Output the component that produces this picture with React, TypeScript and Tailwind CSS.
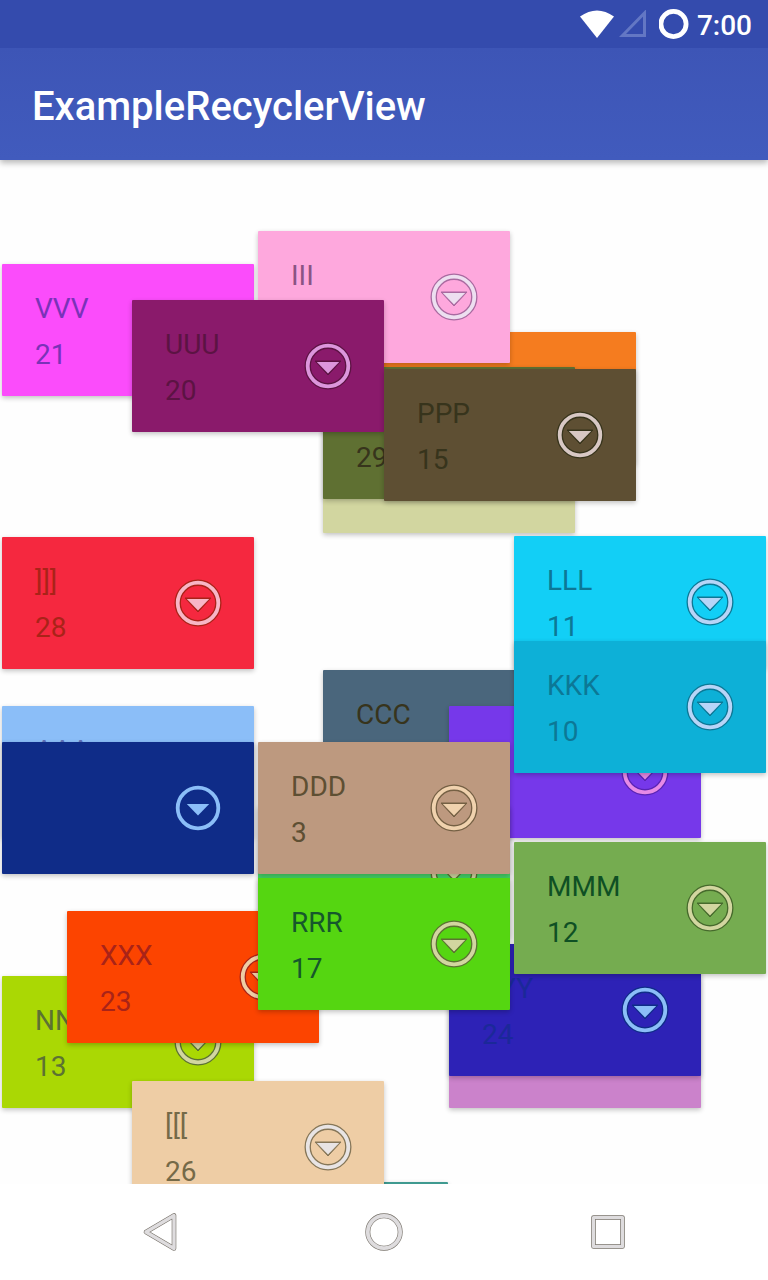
import React from "react";

type CardData = {
  title?: string;
  count?: string;
  place: string;
  fill: string;
  text: string;
  ring: string;
  edge: string;
};

// Listed from the bottom of the stack to the top.
const cards: CardData[] = [
  { place: "left-[384px] top-[172px]", fill: "bg-[#f57c1f]", text: "text-[#a8521c]", ring: "text-[#eecda5]", edge: "text-[#a8521c]" },
  { title: "VVV", count: "21", place: "left-[2px] top-[104px]", fill: "bg-[#fb4cfb]", text: "text-[#7a32b8]", ring: "text-[#eecdf5]", edge: "text-[#7a32b8]" },
  { title: "III", place: "left-[258px] top-[71px]", fill: "bg-[#fea8dd]", text: "text-[#8a5484]", ring: "text-[#eddff0]", edge: "text-[#a96aa0]" },
  { place: "left-[323px] top-[241px]", fill: "bg-[#d2d6a0]", text: "text-[#5f7233]", ring: "text-[#e6e4e8]", edge: "text-[#5f7233]" },
  { count: "29", place: "left-[323px] top-[207px]", fill: "bg-[#5f7032]", text: "text-[#37341c]", ring: "text-[#d2d6a0]", edge: "text-[#37341c]" },
  { title: "UUU", count: "20", place: "left-[132px] top-[140px]", fill: "bg-[#8a1a6b]", text: "text-[#5c1343]", ring: "text-[#dc96dc]", edge: "text-[#5c1343]" },
  { title: "PPP", count: "15", place: "left-[384px] top-[209px]", fill: "bg-[#5e4f33]", text: "text-[#37341c]", ring: "text-[#d8c8c4]", edge: "text-[#37341c]" },
  { title: "]]]", count: "28", place: "left-[2px] top-[377px]", fill: "bg-[#f5283f]", text: "text-[#a92318]", ring: "text-[#f8b6c6]", edge: "text-[#a92318]" },
  { title: "CCC", place: "left-[323px] top-[510px]", fill: "bg-[#4a667c]", text: "text-[#37341c]", ring: "text-[#d4d4d8]", edge: "text-[#37341c]" },
  { place: "left-[449px] top-[546px]", fill: "bg-[#7638ea]", text: "text-[#2d22b6]", ring: "text-[#e78ae6]", edge: "text-[#5a24b4]" },
  { title: "LLL", count: "11", place: "left-[514px] top-[376px]", fill: "bg-[#12cff6]", text: "text-[#0c7896]", ring: "text-[#b7d5f8]", edge: "text-[#0c7896]" },
  { title: "KKK", count: "10", place: "left-[514px] top-[481px]", fill: "bg-[#0db0d7]", text: "text-[#0c7896]", ring: "text-[#b7d5f8]", edge: "text-[#0c7896]" },
  { title: "AAA", place: "left-[2px] top-[546px]", fill: "bg-[#8bbef8]", text: "text-[#5c70b8]", ring: "text-[#e6e4e8]", edge: "text-[#5c70b8]" },
  { place: "left-[2px] top-[582px]", fill: "bg-[#0f2c88]", text: "text-[#0f2c88]", ring: "text-[#8bbef8]", edge: "text-[#0f2c88]" },
  { place: "left-[258px] top-[646px]", fill: "bg-[#44d468]", text: "text-[#5c7233]", ring: "text-[#d2d6a0]", edge: "text-[#5c7233]" },
  { title: "DDD", count: "3", place: "left-[258px] top-[582px]", fill: "bg-[#bd997f]", text: "text-[#5e4f33]", ring: "text-[#f0d2ae]", edge: "text-[#756044]" },
  { title: "NNN", count: "13", place: "left-[2px] top-[816px]", fill: "bg-[#aad804]", text: "text-[#5c7233]", ring: "text-[#d2d6a0]", edge: "text-[#5c7233]" },
  { title: "XXX", count: "23", place: "left-[67px] top-[751px]", fill: "bg-[#fc4400]", text: "text-[#a92318]", ring: "text-[#eecda5]", edge: "text-[#a92318]" },
  { place: "left-[449px] top-[816px]", fill: "bg-[#cb82cb]", text: "text-[#8a5484]", ring: "text-[#e6e4e8]", edge: "text-[#8a5484]" },
  { title: "YYY", count: "24", place: "left-[449px] top-[784px]", fill: "bg-[#2d22b6]", text: "text-[#1b2899]", ring: "text-[#8bbef8]", edge: "text-[#0f2c88]" },
  { title: "RRR", count: "17", place: "left-[258px] top-[718px]", fill: "bg-[#55d611]", text: "text-[#16582c]", ring: "text-[#d2d6a0]", edge: "text-[#5c7233]" },
  { title: "MMM", count: "12", place: "left-[514px] top-[682px]", fill: "bg-[#75ac50]", text: "text-[#0f5024]", ring: "text-[#d2d6a0]", edge: "text-[#466a2c]" },
  { place: "left-[196px] top-[1022px]", fill: "bg-[#3f9a90]", text: "text-[#0c7896]", ring: "text-[#b7d5f8]", edge: "text-[#0c7896]" },
  { title: "[[[", count: "26", place: "left-[132px] top-[921px]", fill: "bg-[#eecda5]", text: "text-[#756a48]", ring: "text-[#e8e4e4]", edge: "text-[#857658]" },
];

function ExpandIcon({ ring, edge }: { ring: string; edge: string }) {
  return (
    <svg viewBox="0 0 48 48" className="size-12" aria-hidden="true">
      <g className={edge} fill="none" stroke="currentColor">
        <circle cx="24" cy="24" r="20.3" strokeWidth="6.4" />
        <path d="M11 19H37L24 33Z" fill="currentColor" strokeWidth="1" strokeLinejoin="round" />
      </g>
      <g className={ring} fill="none" stroke="currentColor">
        <circle cx="24" cy="24" r="20.3" strokeWidth="3.8" />
        <path d="M12.8 20H35.2L24 31.6Z" fill="currentColor" stroke="none" />
      </g>
    </svg>
  );
}

function Card({ title, count, place, fill, text, ring, edge }: CardData) {
  return (
    <li
      className={`absolute flex h-[132px] w-[252px] items-center justify-between rounded-[1px] pl-[33px] pr-8 shadow-[0_2px_5px_rgba(0,0,0,0.24)] ${place} ${fill}`}
    >
      <div className={`flex flex-col gap-2 self-start pt-[26px] text-[28px] leading-[38px] ${text}`}>
        <p className="h-[38px]">{title}</p>
        <p className="h-[38px]">{count}</p>
      </div>
      <button type="button" aria-label="Expand" className="shrink-0">
        <ExpandIcon ring={ring} edge={edge} />
      </button>
    </li>
  );
}

function StatusBar() {
  return (
    <div className="flex h-12 items-center justify-end bg-[#344bad] pr-4 text-white">
      <svg viewBox="0 0 36 30" className="mr-1 h-[30px] w-9" aria-hidden="true">
        <path d="M1 7.5Q18-4.5 35 7.5L18 29Z" fill="currentColor" />
      </svg>
      <svg viewBox="0 0 28 28" className="mr-3 size-7" aria-hidden="true">
        <path d="M3.5 25.5H25.5V3Z" fill="none" stroke="#6377c4" strokeWidth="3" />
      </svg>
      <svg viewBox="0 0 30 30" className="mr-2 size-[30px]" aria-hidden="true">
        <circle cx="14.5" cy="15" r="12.6" fill="none" stroke="currentColor" strokeWidth="4.8" />
      </svg>
      <time className="pt-1 text-[28px] font-medium leading-8">7:00</time>
    </div>
  );
}

function NavBar() {
  const line = "fill-none stroke-[#dedcde]";
  const edge = "fill-none stroke-[#77726a]";
  return (
    <nav className="flex h-24 shrink-0 items-center justify-center gap-44 bg-white">
      <button type="button" aria-label="Back">
        <svg viewBox="0 0 48 48" className="size-12" strokeLinejoin="round">
          <path className={edge} strokeWidth="4.6" d="M10 24L38 7.5V40.5Z" />
          <path className={line} strokeWidth="3.4" d="M10 24L38 7.5V40.5Z" />
        </svg>
      </button>
      <button type="button" aria-label="Home">
        <svg viewBox="0 0 48 48" className="size-12">
          <circle className={edge} strokeWidth="5" cx="24" cy="24" r="16.2" />
          <circle className={line} strokeWidth="3.8" cx="24" cy="24" r="16.2" />
        </svg>
      </button>
      <button type="button" aria-label="Recent apps">
        <svg viewBox="0 0 48 48" className="size-12" strokeLinejoin="round">
          <rect className={edge} strokeWidth="4.6" x="9.5" y="9.5" width="29" height="29" />
          <rect className={line} strokeWidth="3.2" x="9.5" y="9.5" width="29" height="29" />
        </svg>
      </button>
    </nav>
  );
}

export default function App() {
  return (
    <div className="flex min-h-screen flex-col bg-white font-[Roboto,sans-serif]">
      <header className="relative z-10 shadow-[0_3px_6px_rgba(0,0,0,0.28)]">
        <StatusBar />
        <div className="flex h-28 items-center bg-linear-to-b from-[#3d55b6] to-[#415bbd] px-8 pt-1.5">
          <h1 className="text-[40px] font-medium leading-[56px] text-white">ExampleRecyclerView</h1>
        </div>
      </header>
      <main className="flex flex-1 flex-col overflow-hidden bg-[#fefefe]">
        <ul className="relative min-h-0 flex-1">
          {cards.map((card, i) => (
            <Card key={i} {...card} />
          ))}
        </ul>
      </main>
      <NavBar />
    </div>
  );
}
